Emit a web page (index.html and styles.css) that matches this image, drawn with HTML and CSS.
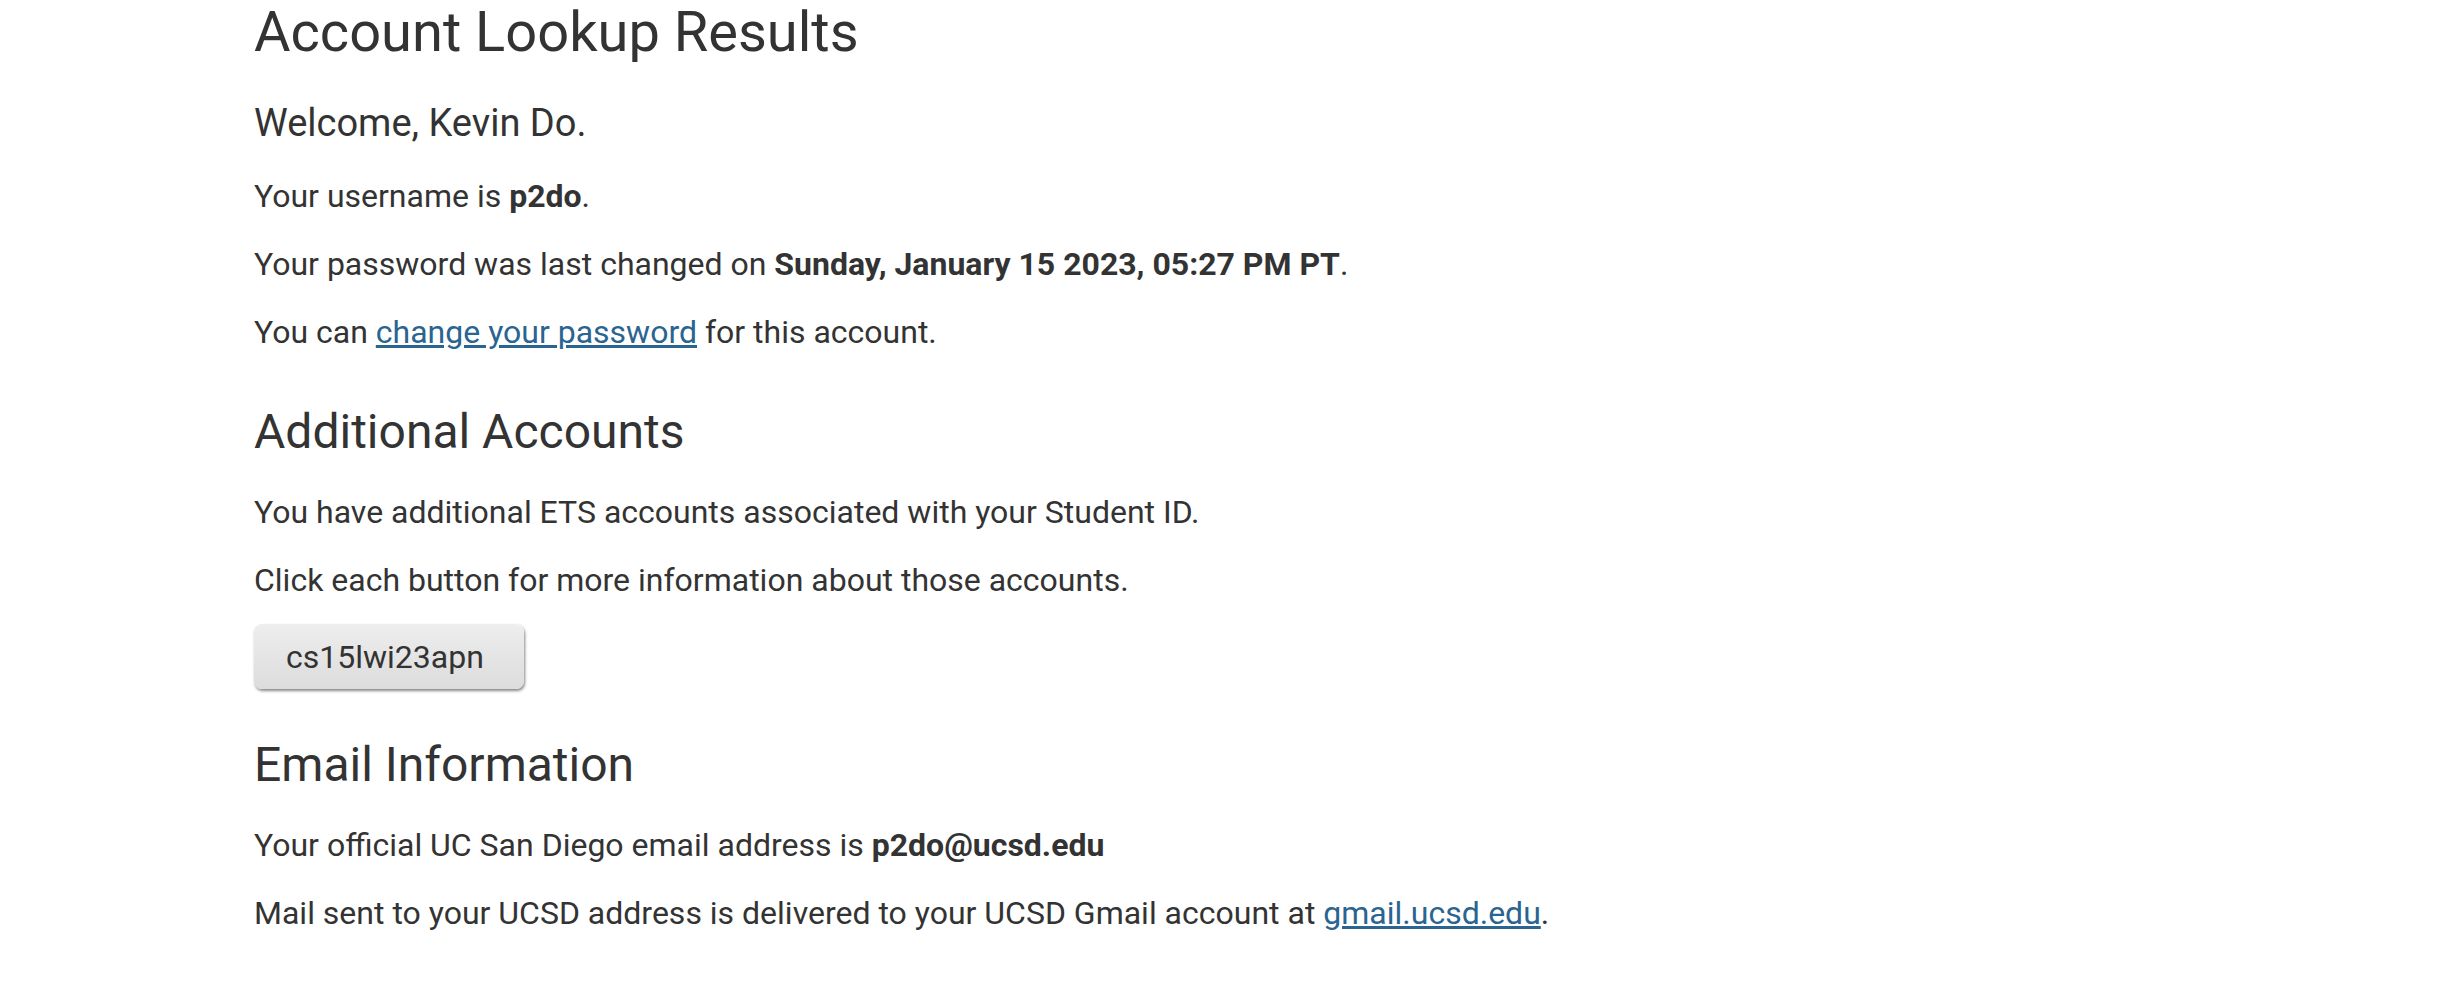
FILE: index.html
```html
<!DOCTYPE html>
<html lang="en">
<head>
<meta charset="utf-8">
<title>Account Lookup Results</title>
<link rel="stylesheet" href="styles.css">
</head>
<body>
<main class="content">
<h1 class="title">Account Lookup Results</h1>
<h3 class="welcome">Welcome, Kevin Do.</h3>
<p>Your username is <b>p2do</b>.</p>
<p>Your password was last changed on <b>Sunday, January 15 2023, 05:27 PM PT</b>.</p>
<p>You can <a href="#password">change your password</a> for this account.</p>
<h2 class="section-title">Additional Accounts</h2>
<p>You have additional ETS accounts associated with your Student ID.</p>
<p>Click each button for more information about those accounts.</p>
<button class="account-button" type="button">cs15lwi23apn</button>
<h2 class="section-title">Email Information</h2>
<p>Your official UC San Diego email address is <b>p2do@ucsd.edu</b></p>
<p>Mail sent to your UCSD address is delivered to your UCSD Gmail account at <a href="#gmail">gmail.ucsd.edu</a>.</p>
</main>
</body>
</html>
```
FILE: styles.css
```css
body {
  margin: 0;
  background: #fff;
  color: #333;
  font: 32px/48px Roboto, sans-serif;
}

.content {
  padding: 0 254px 20px;
}

h1, h2, h3 {
  margin: 0;
  font-weight: 400;
}

.title {
  font-size: 56px;
  line-height: 64px;
}

.welcome {
  margin: 36px 0 26px;
  font-size: 38px;
  line-height: 46px;
}

.section-title {
  margin: 46px 0 26px;
  font-size: 48px;
  line-height: 60px;
}

p {
  margin: 0 0 20px;
}

b {
  font-weight: 700;
}

a {
  color: #2a6490;
}

.account-button {
  display: block;
  padding: 9px 40px 8px 32px;
  border: 0;
  border-radius: 8px;
  background: linear-gradient(#eee, #dcdcdc);
  box-shadow: 1px 2px 3px #888;
  color: #333;
  font: inherit;
}
```
